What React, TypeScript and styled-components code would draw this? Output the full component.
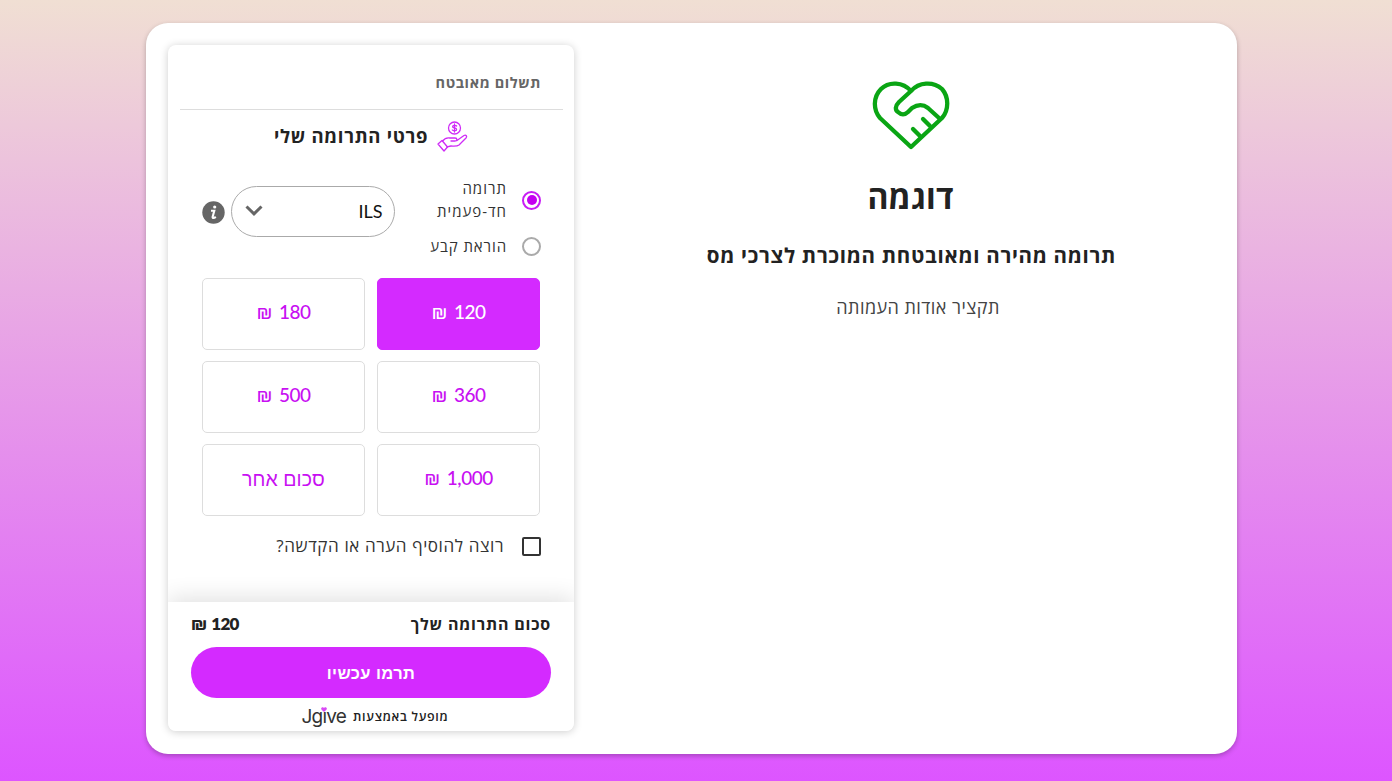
import React, { FunctionComponent, useState } from "react";
import styled, { createGlobalStyle } from "styled-components";

const GlobalStyle = createGlobalStyle`
  * {
    box-sizing: border-box;
  }
  body {
    margin: 0;
    font-family: "Open Sans", "Noto Sans", "DejaVu Sans", sans-serif;
    color: #222;
  }
`;

const Page = styled.div`
  height: 781px;
  padding: 23px 155px 27px 146px;
  overflow: hidden;
  background: linear-gradient(180deg, #f0dfd3 0%, #dd55ff 100%);
`;

const Card = styled.main`
  display: flex;
  height: 731px;
  padding: 22px 0 23px 22px;
  border-radius: 22px;
  background: #fff;
  box-shadow: 0 2px 5px rgba(0, 0, 0, 0.25);
`;

const About = styled.section`
  flex: 1;
  display: flex;
  flex-direction: column;
  align-items: center;
  padding: 36px 0 0 0;
`;

const Line = styled.div<{ size: number; height: number; weight?: number; spacing?: number; color?: string }>`
  font-size: ${props => props.size}px;
  line-height: ${props => props.height}px;
  font-weight: ${props => props.weight || 400};
  letter-spacing: ${props => props.spacing || 0}px;
  color: ${props => props.color || "#222"};
  white-space: nowrap;
`;

const OrgName = styled(Line)`
  margin-top: 24px;
`;

const Tagline = styled(Line)`
  margin-top: 20px;
  padding-left: 2px;
`;

const Summary = styled(Line)`
  margin-top: 22px;
  padding-left: 15px;
`;

const Panel = styled.section`
  display: flex;
  flex-direction: column;
  width: 406px;
  margin-right: 10px;
  border-radius: 8px;
  background: #fff;
  box-shadow: 0 1px 8px rgba(0, 0, 0, 0.2);
  overflow: hidden;
`;

const PanelHeader = styled.header`
  height: 65px;
  margin: 0 11px 0 12px;
  padding: 26px 22px 0;
  border-bottom: 1px solid #ddd;
`;

const PanelTitle = styled.div`
  display: flex;
  justify-content: center;
  align-items: center;
  gap: 9px;
  height: 52px;
`;

const Options = styled.div`
  display: flex;
  height: 107px;
  padding: 15px 33px 0 34px;
`;

const RadioGroup = styled.div`
  width: 134px;
`;

const RadioLabel = styled.label`
  display: flex;
  align-items: center;
  gap: 15px;
  min-height: 23px;
  margin-bottom: 12px;
  cursor: pointer;
`;

const RadioDot = styled.span<{ checked: boolean }>`
  display: flex;
  align-items: center;
  justify-content: center;
  width: 19px;
  height: 19px;
  border: 2px solid ${props => props.checked ? "#c81cf5" : "#aaa"};
  border-radius: 50%;
  &::after {
    content: "";
    width: 10px;
    height: 10px;
    border-radius: 50%;
    background: ${props => props.checked ? "#c400f0" : "transparent"};
  }
`;

const Currency = styled.button`
  display: flex;
  align-items: center;
  justify-content: space-between;
  width: 164px;
  height: 51px;
  margin: 9px 13px 0 6px;
  padding: 0 11px 2px 13px;
  border: 1px solid #aaa;
  border-radius: 26px;
  background: #fff;
`;

const CurrencyCode = styled.span`
  font-family: Lato, sans-serif;
  font-size: 18px;
  line-height: 24px;
  color: #111;
`;

const Info = styled.span`
  display: flex;
  margin-top: 24px;
`;

const Amounts = styled.div`
  display: grid;
  grid-template-columns: 163px 163px;
  grid-auto-rows: 72px;
  gap: 11px 12px;
  padding: 9px 34px 0;
`;

const Amount = styled.button<{ active?: boolean; shift?: number }>`
  display: flex;
  align-items: baseline;
  justify-content: center;
  gap: 7px;
  padding: ${props => props.shift === undefined ? 21 : props.shift}px 0 0;
  border: 1px solid ${props => props.active ? "#d42aff" : "#ddd"};
  border-radius: 5px;
  background: ${props => props.active ? "#d42aff" : "#fff"};
  color: ${props => props.active ? "#fff" : "#c810f2"};
  font-family: Lato, sans-serif;
  font-size: 19px;
  line-height: 24px;
  font-weight: 500;
  letter-spacing: -0.5px;
`;

const Shekel = styled.span<{ size?: number; bold?: boolean }>`
  font-family: Inter, sans-serif;
  font-size: ${props => props.size || 19.5}px;
  font-weight: ${props => props.bold ? 700 : 400};
`;

const Dedication = styled.label`
  display: flex;
  align-items: center;
  gap: 18px;
  height: 24px;
  margin: 18px 33px 0;
`;

const Box = styled.span`
  width: 19px;
  height: 19px;
  border: 2px solid #333;
  border-radius: 2px;
`;

const Footer = styled.footer`
  height: 129px;
  margin-top: auto;
  padding: 10px 23px 0;
  background: #fff;
  box-shadow: 0 -4px 22px rgba(0, 0, 0, 0.12);
`;

const Total = styled.div`
  display: flex;
  justify-content: space-between;
  align-items: center;
  height: 24px;
`;

const Sum = styled.span`
  display: flex;
  align-items: baseline;
  gap: 5px;
  font-family: Lato, sans-serif;
  font-size: 17px;
  line-height: 24px;
  font-weight: 800;
  letter-spacing: -0.8px;
`;

const Donate = styled.button`
  display: flex;
  align-items: center;
  justify-content: center;
  width: 360px;
  height: 51px;
  margin-top: 11px;
  border: 0;
  border-radius: 26px;
  background: #d42aff;
`;

const Powered = styled.div`
  display: flex;
  align-items: center;
  justify-content: center;
  gap: 7px;
  height: 32px;
  padding: 6px 0 0 8px;
`;

const Logo = styled.span`
  position: relative;
  direction: ltr;
  font-family: Inter, sans-serif;
  font-size: 19px;
  line-height: 22px;
  letter-spacing: -0.8px;
  color: #333;
  svg {
    position: absolute;
    left: 19px;
    top: 1px;
  }
`;

const HeartHands = () => (
  <svg width="78" height="70" viewBox="0 0 78 70" fill="none" stroke="#0aa514" strokeWidth="4.3" strokeLinecap="round" strokeLinejoin="round">
    <path d="M39 10C31 1 17 0 9 8C1 16 1 29 8 37L39 66L70 37C77 29 77 16 70 8C61 0 47 1 39 10L27 21C23 25 23 29 26 31C29 34 33 34 36 31L40 27C46 23 51 23 56 27L67 37" />
    <path d="M51 38L58 45M41 48L48 55" />
  </svg>
);

const GiveHand = () => (
  <svg width="31" height="31" viewBox="0 0 31 31" fill="none" stroke="#cf2cf7" strokeWidth="1.3" strokeLinecap="round" strokeLinejoin="round">
    <circle cx="17.5" cy="7" r="6" />
    <path d="M19.6 5C19 4.2 15.6 4 15.6 5.7C15.6 7.4 19.6 6.5 19.6 8.4C19.6 10.1 16 10 15.3 9M17.5 3V11" />
    <path d="M1 23L5 19.5L10.5 26L7 30Z" />
    <path d="M5.5 20C8 17 10 16.3 13 17H18C20.5 17 20.5 20 18 20H14M20 19.5L27 14.5C29 13.5 30.5 15.3 29 17L22 24C20 25.5 17 25 14 25C12 25 11 26 10 26" />
  </svg>
);

const Chevron = () => (
  <svg width="18" height="12" viewBox="0 0 18 12" fill="none" stroke="#666" strokeWidth="3">
    <path d="M1.5 1.5L9 8.8L16.5 1.5" />
  </svg>
);

const InfoIcon = () => (
  <svg width="23" height="23" viewBox="0 0 23 23">
    <circle cx="11.5" cy="11.5" r="11.2" fill="#666" />
    <circle cx="12.7" cy="6" r="1.6" fill="#fff" />
    <path d="M9 9.8H12.3L10.6 16C10.4 17.4 12 17.2 13.8 15.8" fill="none" stroke="#fff" strokeWidth="2.1" />
  </svg>
);

const LogoHeart = () => (
  <svg width="6" height="5" viewBox="0 0 6 5" fill="#d94af5">
    <path d="M3 5L0.4 2.4C-0.6 1 1.4 -0.9 3 0.8C4.6 -0.9 6.6 1 5.6 2.4Z" />
  </svg>
);

const amounts = ["120", "180", "360", "500", "1,000"];

const App: FunctionComponent = () => {
  const [amount, setAmount] = useState("120");
  const [monthly, setMonthly] = useState(false);

  return (
    <>
      <GlobalStyle />
      <Page>
        <Card dir="rtl">
          <About>
            <HeartHands />
            <OrgName size={32} height={44} weight={700} spacing={0.2}>דוגמה</OrgName>
            <Tagline size={20.5} height={32} weight={700} spacing={0.7}>תרומה מהירה ומאובטחת המוכרת לצרכי מס</Tagline>
            <Summary size={18} height={28} spacing={0.45} color="#444">תקציר אודות העמותה</Summary>
          </About>
          <Panel>
            <PanelHeader>
              <Line size={14.5} height={24} weight={700} spacing={0.6} color="#666">תשלום מאובטח</Line>
            </PanelHeader>
            <PanelTitle>
              <GiveHand />
              <Line size={18.5} height={28} weight={700} spacing={0.7}>פרטי התרומה שלי</Line>
            </PanelTitle>
            <Options>
              <RadioGroup>
                <RadioLabel onClick={() => setMonthly(false)}>
                  <RadioDot checked={!monthly} />
                  <Line size={15} height={23} spacing={1} color="#333">תרומה<br />חד-פעמית</Line>
                </RadioLabel>
                <RadioLabel onClick={() => setMonthly(true)}>
                  <RadioDot checked={monthly} />
                  <Line size={15} height={23} spacing={0.9} color="#333">הוראת קבע</Line>
                </RadioLabel>
              </RadioGroup>
              <Currency>
                <CurrencyCode>ILS</CurrencyCode>
                <Chevron />
              </Currency>
              <Info><InfoIcon /></Info>
            </Options>
            <Amounts>
              {amounts.map(value => (
                <Amount key={value} active={value === amount} onClick={() => setAmount(value)}>
                  <span>{value}</span>
                  <Shekel>₪</Shekel>
                </Amount>
              ))}
              <Amount shift={20}>
                <Line size={19.5} height={28} spacing={0.2} color="#c810f2">סכום אחר</Line>
              </Amount>
            </Amounts>
            <Dedication>
              <Box />
              <Line size={17} height={24} spacing={0.6} color="#333">רוצה להוסיף הערה או הקדשה?</Line>
            </Dedication>
            <Footer>
              <Total>
                <Line size={16} height={24} weight={700} spacing={0.8}>סכום התרומה שלך</Line>
                <Sum>
                  <span>{amount}</span>
                  <Shekel size={17.5} bold>₪</Shekel>
                </Sum>
              </Total>
              <Donate>
                <Line size={16.5} height={24} weight={600} spacing={0.4} color="#fff">תרמו עכשיו</Line>
              </Donate>
              <Powered>
                <Line size={12.5} height={20} weight={600} spacing={0.7}>מופעל באמצעות</Line>
                <Logo>Jgıve<LogoHeart /></Logo>
              </Powered>
            </Footer>
          </Panel>
        </Card>
      </Page>
    </>
  );
};

export default App;
